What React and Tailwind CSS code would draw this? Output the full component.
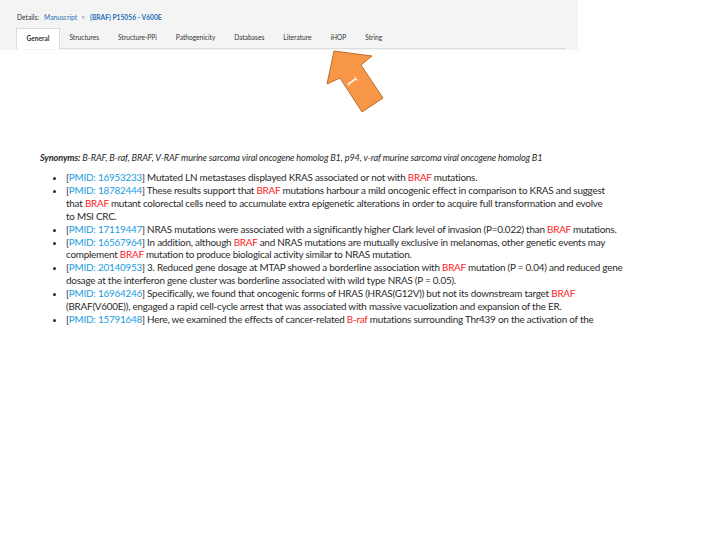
import React from "react";

const B = ({ children }) => <span className="text-[#ff1a1a]">{children}</span>;
const P = ({ id }) => (
  <>
    [<span className="text-[#1a9be0]">PMID: {id}</span>]
  </>
);

export default function App() {
  const tabs = ["General", "Structures", "Structure-PPi", "Pathogenicity", "Databases", "Literature", "iHOP", "String"];
  return (
    <div className="relative w-[720px] h-[539px] bg-white overflow-hidden" style={{ fontFamily: "Lato, 'Open Sans', sans-serif" }}>
      <div className="w-[578px] h-[50px] bg-[#f4f4f4] pt-[13px] pl-[17px]">
        <div className="flex items-center text-[6.7px] leading-[9px] text-[#333]">
          <span>Details:</span>
          <span className="ml-[5px] text-[#1f6fb5]">Manuscript</span>
          <span className="ml-[4px] text-[#777]">&gt;</span>
          <span className="ml-[5px] font-bold text-[#1f6fb5]">(BRAF) P15056 - V600E</span>
        </div>
        <div className="mt-[6px] mr-[12px] ml-[-1px] flex border-b border-[#dcdcdc] h-[21px]">
          {tabs.map((t, i) => (
            <div
              key={t}
              className={
                "px-[9.5px] flex items-center text-[6.6px] text-[#333] " +
                (i === 0 ? "bg-white border border-b-0 border-[#dcdcdc] font-bold mb-[-1px] pb-[1px]" : "")
              }
            >
              {t}
            </div>
          ))}
        </div>
      </div>

      <svg className="absolute left-0 top-0" width="720" height="539" viewBox="0 0 720 539">
        <polygon
          points="334,51 372,56 361,65 383,98 362,112 340,78 327,84"
          fill="#f79646"
          stroke="#b9702f"
          strokeWidth="1"
          strokeLinejoin="miter"
        />
        <text
          x="0"
          y="0"
          fill="white"
          fontSize="16"
          textAnchor="middle"
          dominantBaseline="central"
          fontFamily="'Liberation Serif', serif"
          transform="translate(352,82) rotate(-125)"
        >
          1
        </text>
      </svg>

      <div className="absolute left-[40px] top-[151px] w-[640px] text-[#2a2a2a]">
        <div className="italic text-[9.2px] leading-[13px] tracking-[-0.15px] whitespace-nowrap">
          <span className="font-bold">Synonyms:</span> B-RAF, B-raf, BRAF, V-RAF murine sarcoma viral oncogene homolog B1, p94, v-raf murine sarcoma viral oncogene homolog B1
        </div>
        <ul className="mt-[7px] pl-[26px] list-disc text-[9.9px] leading-[12.9px] tracking-[-0.22px] whitespace-nowrap">
          <li><P id="16953233" /> Mutated LN metastases displayed KRAS associated or not with <B>BRAF</B> mutations.</li>
          <li>
            <P id="18782444" /> These results support that <B>BRAF</B> mutations harbour a mild oncogenic effect in comparison to KRAS and suggest
            <br />
            that <B>BRAF</B> mutant colorectal cells need to accumulate extra epigenetic alterations in order to acquire full transformation and evolve
            <br />
            to MSI CRC.
          </li>
          <li><P id="17119447" /> NRAS mutations were associated with a significantly higher Clark level of invasion (P=0.022) than <B>BRAF</B> mutations.</li>
          <li>
            <P id="16567964" /> In addition, although <B>BRAF</B> and NRAS mutations are mutually exclusive in melanomas, other genetic events may
            <br />
            complement <B>BRAF</B> mutation to produce biological activity similar to NRAS mutation.
          </li>
          <li>
            <P id="20140953" /> 3. Reduced gene dosage at MTAP showed a borderline association with <B>BRAF</B> mutation (P = 0.04) and reduced gene
            <br />
            dosage at the interferon gene cluster was borderline associated with wild type NRAS (P = 0.05).
          </li>
          <li>
            <P id="16964246" /> Specifically, we found that oncogenic forms of HRAS (HRAS(G12V)) but not its downstream target <B>BRAF</B>
            <br />
            (BRAF(V600E)), engaged a rapid cell-cycle arrest that was associated with massive vacuolization and expansion of the ER.
          </li>
          <li><P id="15791648" /> Here, we examined the effects of cancer-related <B>B-raf</B> mutations surrounding Thr439 on the activation of the</li>
        </ul>
      </div>
    </div>
  );
}
